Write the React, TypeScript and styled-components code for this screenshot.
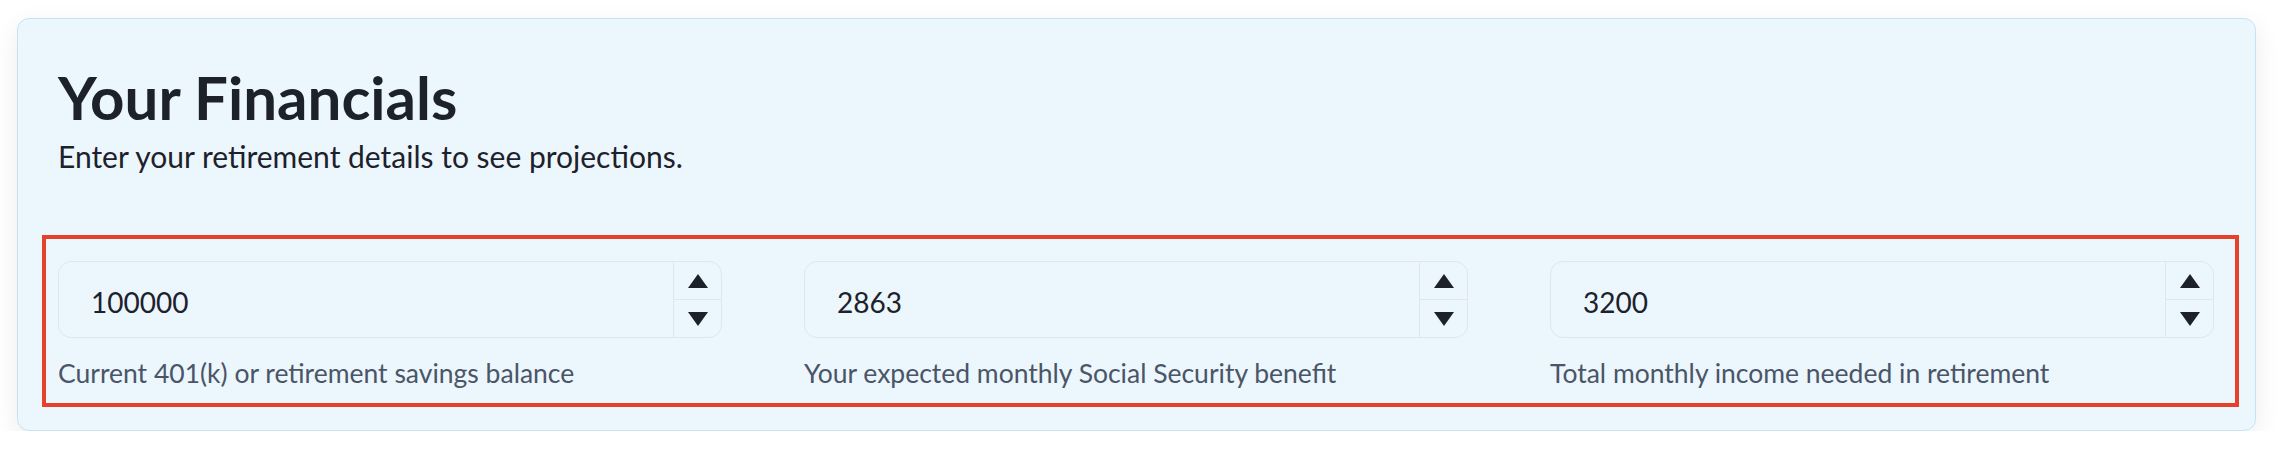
import * as React from "react";
import styled, { createGlobalStyle } from "styled-components";

const GlobalStyle = createGlobalStyle`
  html, body {
    margin: 0;
    padding: 0;
    background: #ffffff;
  }
  body {
    font-family: "Lato", "Liberation Sans", sans-serif;
    color: #1d212b;
  }
`;

const Card = styled.section`
  margin: 18px 22px 0 17px;
  padding: 42px 16px 23px 24px;
  background: #ecf6fd;
  border: 1.5px solid #c6e2f6;
  border-radius: 12px;
  box-shadow: 0 8px 26px rgba(0, 0, 0, 0.08);
`;

const Header = styled.header`
  padding-left: 16px;
`;

const Title = styled.h2`
  margin: 0;
  font-size: 60px;
  line-height: 1.2;
  font-weight: 700;
  color: #1d212b;
`;

const Subtitle = styled.p`
  margin: 5px 0 0;
  font-size: 30px;
  line-height: 1.2;
  color: #1d212b;
`;

const Highlight = styled.div`
  margin-top: 61px;
  padding: 22px 21px 13px 12px;
  border: 4px solid #e5412b;
  display: grid;
  grid-template-columns: repeat(3, 1fr);
  column-gap: 82px;
`;

const Field = styled.div`
  display: flex;
  flex-direction: column;
`;

const InputBox = styled.div`
  display: flex;
  height: 77px;
  box-sizing: border-box;
  border: 1.5px solid #e1e6ee;
  border-radius: 13px;
  overflow: hidden;
`;

const ValueInput = styled.input`
  flex: 1;
  min-width: 0;
  border: none;
  outline: none;
  background: transparent;
  padding: 4px 0 0 32px;
  font-family: "Lato", "Liberation Sans", sans-serif;
  font-size: 28px;
  color: #1d212b;
`;

const Stepper = styled.div`
  width: 47px;
  display: flex;
  flex-direction: column;
  border-left: 1.5px solid #e1e6ee;
`;

const StepButton = styled.button<{ $down?: boolean }>`
  flex: 1;
  display: flex;
  align-items: center;
  justify-content: center;
  padding: 0;
  border: none;
  background: transparent;
  border-top: ${(p) => (p.$down ? "1.5px solid #e1e6ee" : "none")};
  cursor: pointer;
`;

const Caption = styled.label`
  margin-top: 20px;
  font-size: 26.5px;
  line-height: 1.2;
  color: #4a5567;
`;

const Triangle = ({ down }: { down?: boolean }) => (
  <svg width="20" height="14" viewBox="0 0 20 14">
    <polygon
      points={down ? "0,0 20,0 10,14" : "10,0 20,14 0,14"}
      fill="#1d212b"
    />
  </svg>
);

type FieldData = { value: string; label: string };

const fields: FieldData[] = [
  { value: "100000", label: "Current 401(k) or retirement savings balance" },
  { value: "2863", label: "Your expected monthly Social Security benefit" },
  { value: "3200", label: "Total monthly income needed in retirement" },
];

const NumberField = ({ value, label }: FieldData) => (
  <Field>
    <InputBox>
      <ValueInput type="text" defaultValue={value} aria-label={label} />
      <Stepper>
        <StepButton aria-label="increase">
          <Triangle />
        </StepButton>
        <StepButton $down aria-label="decrease">
          <Triangle down />
        </StepButton>
      </Stepper>
    </InputBox>
    <Caption>{label}</Caption>
  </Field>
);

export default function App() {
  return (
    <>
      <GlobalStyle />
      <Card>
        <Header>
          <Title>Your Financials</Title>
          <Subtitle>Enter your retirement details to see projections.</Subtitle>
        </Header>
        <Highlight>
          {fields.map((f) => (
            <NumberField key={f.label} {...f} />
          ))}
        </Highlight>
      </Card>
    </>
  );
}
